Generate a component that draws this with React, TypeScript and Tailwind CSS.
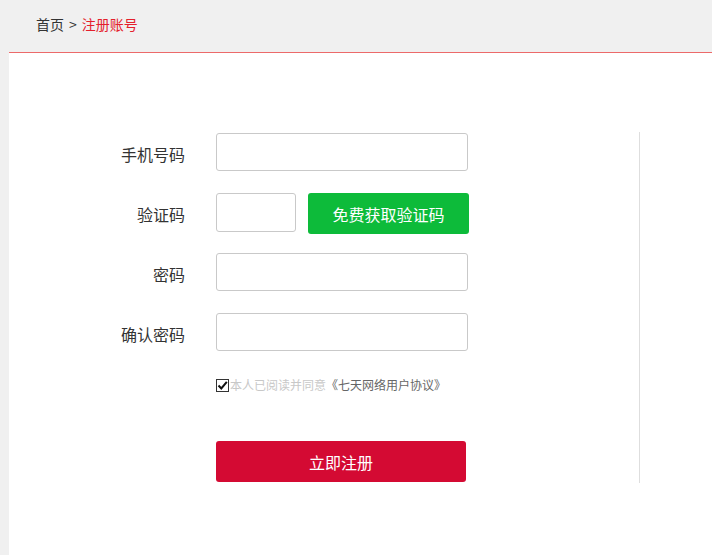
import React from "react";

const font = { fontFamily: '"Noto Sans CJK SC", "Microsoft YaHei", sans-serif' };

function Row({ label, children }: { label: string; children: React.ReactNode }) {
  return (
    <div className="flex items-start h-[38px] mb-[22px]">
      <div className="w-[176px] h-[38px] pt-[4px] flex items-center justify-end text-[16px] text-[#333]">
        {label}
      </div>
      <div className="ml-[31px] flex items-start">{children}</div>
    </div>
  );
}

export default function App() {
  return (
    <div className="w-full h-[555px] bg-[#f0f0f0] overflow-hidden" style={font}>
      <div className="h-[52px] flex items-center pb-[4px] pl-[36px] text-[14px] text-[#333]">
        <span>首页</span>
        <span className="mx-[5px]">&gt;</span>
        <span className="text-[#e4202c]">注册账号</span>
      </div>
      <div className="ml-[9px] h-[503px] bg-white border-t border-[#ec6a6a] pt-[79px]">
        <div className="w-[631px] h-[351px] border-r border-[#dedede] pt-[1px]">
          <Row label="手机号码">
            <input className="w-[252px] h-[38px] border border-[#c9c9c9] rounded-[3px] outline-none" />
          </Row>
          <Row label="验证码">
            <input className="w-[80px] h-[39px] border border-[#c9c9c9] rounded-[3px] outline-none" />
            <button className="ml-[12px] w-[161px] h-[41px] bg-[#0dbb3a] rounded-[3px] text-white text-[16px]">
              免费获取验证码
            </button>
          </Row>
          <Row label="密码">
            <input type="password" className="w-[252px] h-[38px] border border-[#c9c9c9] rounded-[3px] outline-none" />
          </Row>
          <Row label="确认密码">
            <input type="password" className="w-[252px] h-[38px] border border-[#c9c9c9] rounded-[3px] outline-none" />
          </Row>
          <div className="ml-[207px] mt-[27px] flex items-center h-[14px] text-[12px]">
            <span className="w-[13px] h-[13px] border border-[#333] bg-white flex items-center justify-center">
              <svg width="11" height="11" viewBox="0 0 11 11">
                <path d="M1.5 5.5 L4.3 8.5 L9.8 1.8" stroke="#111" strokeWidth="2" fill="none" />
              </svg>
            </span>
            <span className="text-[#c8c8c8] ml-[1px]">本人已阅读并同意</span>
            <span className="text-[#666]">《七天网络用户协议》</span>
          </div>
          <div className="ml-[207px] mt-[49px]">
            <button className="w-[250px] h-[41px] bg-[#d40a33] rounded-[3px] text-white text-[16px]">
              立即注册
            </button>
          </div>
        </div>
      </div>
    </div>
  );
}
